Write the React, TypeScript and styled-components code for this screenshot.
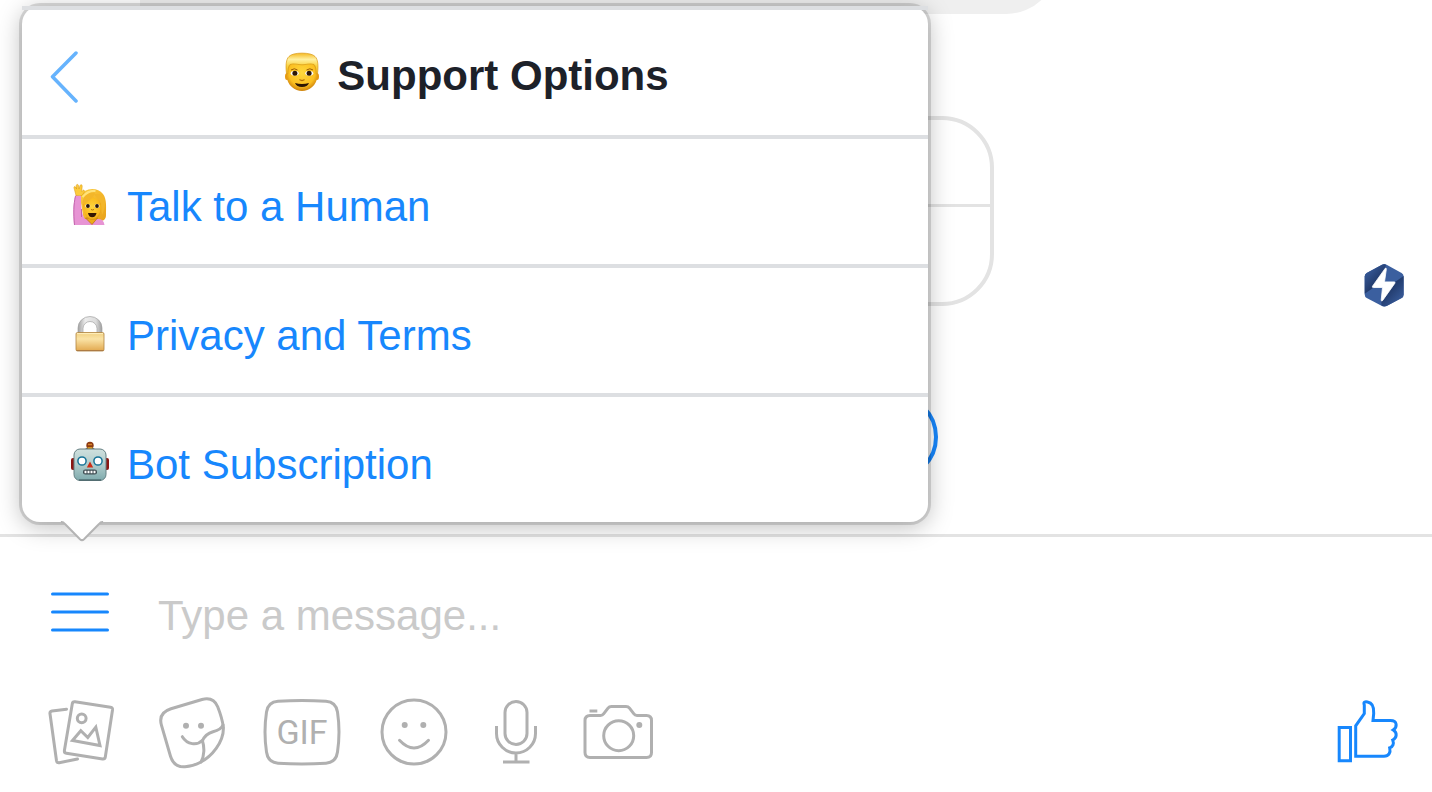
import React from "react";
import styled, { createGlobalStyle } from "styled-components";

const BLUE = "#1787fd";
const GREY = "#b0b0b0";
const LINE = "#e3e3e3";

const GlobalStyle = createGlobalStyle`
  * { box-sizing: border-box; }
  body { margin: 0; background: #fff; font-family: "Liberation Sans", Arial, sans-serif; }
  button { border: 0; padding: 0; background: none; font: inherit; color: inherit; cursor: pointer; }
  svg { display: block; flex: none; }
`;

const Page = styled.div`
  position: relative;
  display: flex;
  flex-direction: column;
  height: 100vh;
  overflow: hidden;
`;

const Conversation = styled.main`
  flex: 1;
  min-height: 0;
  display: flex;
  flex-direction: column;
  justify-content: flex-end;
  overflow: hidden;
  padding: 0 140px 53px;
`;

const Bubble = styled.div`
  flex: none;
  width: 100%;
  max-width: 918px;
  height: 106px;
  margin-bottom: 102px;
  background: #efefef;
  border-radius: 0 52px 52px 0;
`;

const Card = styled.section`
  flex: none;
  display: grid;
  grid-template-rows: 84px 98px;
  width: 100%;
  max-width: 854px;
  margin-bottom: 87px;
  border: 4px solid ${LINE};
  border-radius: 52px;
`;

const CardAction = styled.div`
  &:last-child { border-top: 3px solid ${LINE}; }
`;

const QuickReply = styled.button`
  flex: none;
  align-self: center;
  width: 444px;
  height: 88px;
  && { border: 4px solid ${BLUE}; }
  border-radius: 44px;
`;

const Composer = styled.footer`
  position: relative;
  flex: none;
  border-top: 3px solid ${LINE};
  padding: 48px 32px 23px 48px;
  display: flex;
  flex-direction: column;
  gap: 52px;
`;

const MessageRow = styled.div`
  display: flex;
  align-items: center;
  gap: 46px;
  height: 60px;
`;

const MessageInput = styled.input`
  flex: 1;
  min-width: 0;
  height: 60px;
  padding: 2px 0 0;
  border: 0;
  outline: 0;
  background: none;
  color: #1d2129;
  font: 42px/58px "Liberation Sans", Arial, sans-serif;
  &::placeholder { color: #cacaca; opacity: 1; }
`;

const Toolbar = styled.div`
  display: flex;
  align-items: center;
  gap: 36px;
`;

const ToolButton = styled.button<{ $active?: boolean; $end?: boolean }>`
  margin-left: ${(p) => (p.$end ? "auto" : "0")};
  && { color: ${(p) => (p.$active ? BLUE : GREY)}; }
`;

const Popover = styled.div`
  position: absolute;
  left: 22px;
  bottom: calc(100% + 15px);
  width: 906px;
  max-width: calc(100% - 44px);
  background: #fff;
  border-radius: 18px;
  box-shadow: 0 0 0 3px rgba(0, 0, 0, 0.13), 0 4px 24px 1px rgba(0, 0, 0, 0.26);
`;

const PopoverHeader = styled.header`
  display: grid;
  grid-template-columns: 1fr auto 1fr;
  align-items: center;
  height: 129px;
  padding: 7px 28px 0;
  border-top: 4px solid #dddfe2;
`;

const BackButton = styled.button`
  justify-self: start;
`;

const Title = styled.h1`
  display: flex;
  align-items: center;
  gap: 14px;
  margin: 0;
  color: #1d2129;
  font-size: 42px;
  line-height: 48px;
  font-weight: 700;
  white-space: nowrap;
`;

const MenuItem = styled.button`
  display: flex;
  align-items: center;
  gap: 16px;
  width: 100%;
  height: 129px;
  && {
    padding: 10px 47px 0;
    border-top: 4px solid #dddfe2;
    color: ${BLUE};
  }
  font-size: 42px;
  line-height: 48px;
  text-align: left;
  white-space: nowrap;
`;

const Arrow = styled.svg`
  position: absolute;
  left: 38px;
  top: calc(100% - 2px);
`;

const Badge = styled.button`
  position: absolute;
  top: 264px;
  right: 28px;
`;

const Stroke = styled.svg`
  fill: none;
  stroke: currentColor;
  stroke-width: 3px;
  stroke-linecap: round;
  stroke-linejoin: round;
`;

const ManEmoji = () => (
  <svg width="42" height="48" viewBox="0 0 42 48" aria-hidden="true">
    <defs>
      <radialGradient id="manSkin" cx=".5" cy=".4" r=".62">
        <stop offset="0" stopColor="#ffd83d" />
        <stop offset=".7" stopColor="#fbbf20" />
        <stop offset="1" stopColor="#c87a08" />
      </radialGradient>
      <linearGradient id="manHair" x1="0" y1="0" x2="0" y2="1">
        <stop offset="0" stopColor="#f5b820" />
        <stop offset=".3" stopColor="#fff0a0" />
        <stop offset=".6" stopColor="#fad444" />
        <stop offset="1" stopColor="#f3bd22" />
      </linearGradient>
    </defs>
    <ellipse cx="6" cy="24.500" rx="2" ry="3.500" fill="#e79a12" />
    <ellipse cx="36" cy="24.500" rx="2" ry="3.500" fill="#e79a12" />
    <path d="M6 12C6 7 36 7 36 12v13c0 8-8 14-15 14S6 33 6 25z" fill="url(#manSkin)" />
    <path d="M5.500 21.500C4.500 14 5 7 8 4.500 11.500 0 30.500 0 34 4.500c3 2.500 3.500 9.500 2.500 17l-1.300.5c0-5-.7-8-2.200-9.500-4-1.500-8 .3-12 .3s-8-1.800-12-.3C7.500 14 6.800 17 6.800 22z" fill="url(#manHair)" stroke="#d99812" strokeWidth=".7" />
    <path d="M10 18q3.500-2.500 6.500 0M25.500 18q3.500-2.500 6.500 0" stroke="#9a5b08" strokeWidth="1" fill="none" />
    <ellipse cx="13.700" cy="21.300" rx="4" ry="2.300" fill="#fff" />
    <ellipse cx="28.300" cy="21.300" rx="4" ry="2.300" fill="#fff" />
    <circle cx="13.900" cy="21.300" r="2.500" fill="#2e1705" />
    <circle cx="28.100" cy="21.300" r="2.500" fill="#2e1705" />
    <path d="M18.500 27.500q2.500 2 5 0" stroke="#b66f08" strokeWidth="1.300" fill="none" />
    <path d="M14 31q7 1.800 14 0-1.500 4-7 4t-7-4z" fill="#2c1503" />
  </svg>
);

const WomanEmoji = () => (
  <svg width="42" height="48" viewBox="0 0 42 48" aria-hidden="true">
    <defs>
      <radialGradient id="womanSkin" cx=".5" cy=".45" r=".6">
        <stop offset="0" stopColor="#ffd53c" />
        <stop offset=".75" stopColor="#f9b91d" />
        <stop offset="1" stopColor="#c47708" />
      </radialGradient>
      <linearGradient id="womanHair" x1="0" y1="0" x2="1" y2="1">
        <stop offset="0" stopColor="#f8cf48" />
        <stop offset=".5" stopColor="#f5b72a" />
        <stop offset="1" stopColor="#e7a01a" />
      </linearGradient>
    </defs>
    <path d="M11 14C14 5 28 3 34 11c4 5 3 14 3 21 0 5-3 6-7 6H15z" fill="url(#womanHair)" />
    <path d="M6.500 12 12 13c0 9 0 17 4 23h14c3 0 5 2 5.500 6H5C4 30 4 20 6.500 12z" fill="#e794d4" />
    <path d="M6.500 13C4.500 22 4.500 30 5.500 42M12.500 26v8" stroke="#c468ae" strokeWidth="1" fill="none" />
    <path d="M16.500 35h12l-5.500 6.500z" fill="#edaa18" stroke="#b66d0a" strokeWidth=".7" />
    <path d="M7 12.500C6 8.500 5.500 7 5 5S7 3 7.500 6l-.3-3.500c.3-1.500 2-1.500 2.300 0l.6 3.500.9-3.500c.5-1.300 2.200-1 2.200.5l-.4 5.500 1-1c1-1 2.200-.3 1.200 2L13 12.500z" fill="#fccb3d" stroke="#d7950f" strokeWidth=".5" />
    <path d="M14 20c3-1 8-3 10-6 3 2 6 3 8 7 1 9-3 16-8.500 16S14 29 14 20z" fill="url(#womanSkin)" />
    <path d="M13.500 22C13.500 12 19 8 26 10c-1 5-6 7.500-12.500 12M25 11c2 4 5 5 7 9l1 12c4-8 4-16 0-21z" fill="#f3b62a" />
    <path d="M13.500 14q6-7 13-6" stroke="#ffe27a" strokeWidth="2" fill="none" />
    <ellipse cx="18.800" cy="23" rx="2.500" ry="1.900" fill="#fff" />
    <ellipse cx="28" cy="23" rx="2.500" ry="1.900" fill="#fff" />
    <circle cx="18.900" cy="23" r="1.900" fill="#291405" />
    <circle cx="28" cy="23" r="1.900" fill="#291405" />
    <path d="M22 26.500q1.500 1 3 0" stroke="#b66f08" fill="none" />
    <path d="M19 30h8.500q-.8 4.200-4.300 4.200T19 30z" fill="#341702" />
  </svg>
);

const LockEmoji = () => (
  <svg width="42" height="48" viewBox="0 0 42 48" aria-hidden="true">
    <defs>
      <linearGradient id="brass" x1="0" y1="0" x2="0" y2="1">
        <stop offset="0" stopColor="#f1cf80" />
        <stop offset=".35" stopColor="#fae3a6" />
        <stop offset="1" stopColor="#e2a84e" />
      </linearGradient>
      <linearGradient id="steel" x1="0" y1="0" x2="1" y2="0">
        <stop offset="0" stopColor="#a0a0a0" />
        <stop offset=".3" stopColor="#ececec" />
        <stop offset=".75" stopColor="#dcdcdc" />
        <stop offset="1" stopColor="#9d9d9d" />
      </linearGradient>
    </defs>
    <path d="M9 21V16a12 11.500 0 0 1 24 0v5h-5v-4.500a7 7 0 0 0-14 0V21z" fill="url(#steel)" stroke="#a3a3a3" strokeWidth=".7" />
    <rect x="7" y="20.500" width="28" height="18.500" rx="1.500" fill="url(#brass)" stroke="#b0843f" strokeWidth=".8" />
    <path d="M8 21.600h26" stroke="#fff0bd" strokeWidth="1" />
    <path d="M7.500 38.500h27" stroke="#ad7b43" strokeWidth="1" />
  </svg>
);

const RobotEmoji = () => (
  <svg width="42" height="48" viewBox="0 0 42 48" aria-hidden="true">
    <defs>
      <linearGradient id="robotFace" x1="0" y1="0" x2="0" y2="1">
        <stop offset="0" stopColor="#cfe0de" />
        <stop offset=".5" stopColor="#b0cccb" />
        <stop offset="1" stopColor="#7eaaad" />
      </linearGradient>
    </defs>
    <rect x="2" y="17" width="6" height="12" rx="2" fill="#8b1611" />
    <rect x="34" y="17" width="6" height="12" rx="2" fill="#8b1611" />
    <path d="M16 8.500c0-2.500 10-2.500 10 0z" fill="#3c464c" />
    <circle cx="21" cy="4.500" r="3.700" fill="#8c3a12" />
    <path d="M19 3.500h4" stroke="#d8832a" strokeWidth="1.500" />
    <path d="M18.500 7h5" stroke="#e9b228" strokeWidth="1.500" />
    <rect x="5" y="8" width="32" height="31.500" rx="6" fill="url(#robotFace)" stroke="#647f82" strokeWidth="1" />
    <path d="M10 39h22" stroke="#496468" strokeWidth="1.300" />
    <circle cx="13" cy="20" r="4.100" fill="#fff" stroke="#177397" strokeWidth="1.500" />
    <circle cx="29" cy="20" r="4.100" fill="#fff" stroke="#177397" strokeWidth="1.500" />
    <path d="m21 20.500 3.200 6h-6.400z" fill="#cd2e16" />
    <rect x="14" y="28.500" width="14" height="5" rx="2.300" fill="#3c4b50" />
    <path d="M15.500 31h11" stroke="#fff" strokeWidth="2.500" strokeDasharray="2 1" />
  </svg>
);

const PhotoIcon = () => (
  <Stroke width="74" height="72" viewBox="48 697 74 72" aria-hidden="true">
    <path d="M66.500 709.200 52 711q-2.300.4-2 2.700l6.500 47q.4 2.300 2.700 2L77.500 759" />
    <path d="m75 701.800 35.500 5.400q2.300.4 2 2.700l-7.200 47q-.4 2.300-2.700 2l-36.200-5.600q-2.300-.4-2-2.700l7.900-46.800q.4-2.300 2.700-2z" />
    <circle cx="81.700" cy="718.300" r="4.400" />
    <path strokeLinejoin="miter" d="m72.500 740.500 8.300-9.800 7 6.800 8-10.300 4.200 18.300z" />
  </Stroke>
);

const StickerIcon = () => (
  <Stroke width="68" height="72" viewBox="158 697 68 72" aria-hidden="true">
    <path d="m171 708.800 31-9.300q11.500-3 15.700 7.300 4.500 11.500 5.700 20.500c.5 15-11.900 29.500-23.400 35.200-4.500 2.500-10 4-15 4.300-8 .5-12.500-4-14.500-10.500l-9-31c-2.500-8.500 1.500-14 9.500-16.500z" />
    <path d="M223 725c-1.500 4-5 5.500-10 6.700-5.500 1.500-8.500 4.300-10.500 9M202.500 741c2 6 2 15-1.500 21" />
    <path d="M182.300 736.700c5 8 14.500 9.300 20.200 3.600" />
    <circle cx="186" cy="725.700" r="3" fill="currentColor" stroke="none" />
    <circle cx="201" cy="725.700" r="3" fill="currentColor" stroke="none" />
  </Stroke>
);

const GifText = styled.text`
  fill: currentColor;
  stroke: none;
  font: 400 34px Roboto, sans-serif;
  text-anchor: middle;
`;

const GifIcon = () => (
  <Stroke width="80" height="72" viewBox="262 697 80 72" aria-hidden="true">
    <path d="M278 701.300q24-1.800 48 0 10 .7 11.500 10.700 3 20 0 40-1.500 10.500-11.500 11.200-24 1.600-48 0-10-.7-11.500-11.200-3-20 0-40 1.500-10 11.500-10.700z" />
    <GifText x="302" y="744">GIF</GifText>
  </Stroke>
);

const SmileIcon = () => (
  <Stroke width="72" height="72" viewBox="378 697 72 72" aria-hidden="true">
    <circle cx="414" cy="732" r="32" />
    <path d="M399.500 740.300q14.500 15.500 29 0" />
    <circle cx="404.700" cy="725" r="3" fill="currentColor" stroke="none" />
    <circle cx="423.300" cy="725" r="3" fill="currentColor" stroke="none" />
  </Stroke>
);

const MicIcon = () => (
  <Stroke width="60" height="72" viewBox="486 697 60 72" aria-hidden="true">
    <rect x="505" y="701.500" width="22" height="43" rx="11" />
    <path strokeLinecap="butt" d="M496.500 726v7.500a19.500 19.500 0 0 0 39 0V726M516 753v9M503 762h26.500" />
  </Stroke>
);

const CameraIcon = () => (
  <Stroke width="72" height="72" viewBox="582 697 72 72" aria-hidden="true">
    <path d="M590 715.500h10.500q2 0 3.300-1.800l4.200-5.500q1.300-1.700 3.500-1.700H626q2.200 0 3.500 1.700l4.200 5.500q1.300 1.800 3.300 1.800h9.500q5 0 5 5v32q0 5-5 5H590q-5 0-5-5v-32q0-5 5-5z" />
    <circle cx="618.700" cy="735.700" r="15" />
    <path strokeLinecap="butt" d="M589.500 711h7.800" />
    <circle cx="639.300" cy="725" r="3" fill="currentColor" stroke="none" />
  </Stroke>
);

const LikeIcon = () => (
  <Stroke width="64" height="72" viewBox="1336 697 64 72" aria-hidden="true">
    <path strokeLinejoin="miter" d="M1339.200 727.500h11.300v33.300h-11.300zM1355.700 756.300v-30.500l8.600-12.300v-8.500c-1.300-3.500 1.200-3.300 3.200-3 5.200.7 6.500 6 6.200 11.500l-.7 7h17.500c7 0 7 6.500 2.700 9.500 4.300 2.500 3.800 8-.5 10 1.500 3.800.3 6.700-3 7.800 1.200 5-1 8.500-5.700 8.500z" />
  </Stroke>
);

const BoltBadge = () => (
  <svg width="40" height="43" viewBox="1364 264 40 43" aria-hidden="true">
    <defs>
      <linearGradient id="hexLeft" x1="0" y1="0" x2=".8" y2="1">
        <stop offset=".1" stopColor="#3b5f9f" />
        <stop offset=".7" stopColor="#1f3767" />
      </linearGradient>
      <linearGradient id="hexRight" x1="1" y1="1" x2=".2" y2="0">
        <stop offset=".1" stopColor="#3b5f9f" />
        <stop offset=".7" stopColor="#1f3767" />
      </linearGradient>
    </defs>
    <path d="M1382 264.700q2.300-1.200 4.600 0l15 8.200q2 1.200 2 3.500v18q0 2.300-2 3.500l-15 8.200q-2.300 1.200-4.600 0l-15.300-8.200q-2-1.200-2-3.500v-18q0-2.300 2-3.500z" fill="#3b5f9f" />
    <path d="M1382 264.700q2-1 4 0l-1 5-10.300 17-10 7v-17.300q0-2.300 2-3.500z" fill="url(#hexLeft)" />
    <path d="M1382 306q-1-1-.5-5l13.500-19 8.600-6v18.400q0 2.300-2 3.500l-15 8.200z" fill="url(#hexRight)" />
    <path d="M1385.300 268.200 1372.500 286.200q-.7 1.300.8 1.300h9.200l-1.300 12.500c0 1.100.8 1.300 1.500.4l12.200-17.200q.7-1.300-.8-1.300h-9.600l1.800-12.400c0-1.300-.4-1.800-1-1.300z" fill="#fff" stroke="#fff" strokeWidth=".8" strokeLinejoin="round" />
  </svg>
);

const MenuIcon = () => (
  <Stroke width="64" height="60" viewBox="48 585 64 60" aria-hidden="true">
    <path d="M52.500 594h55M52.500 612h55M52.500 630h55" />
  </Stroke>
);

const BackIcon = () => (
  <Stroke width="30" height="54" viewBox="50 50 30 54" color="#66b3fd" aria-hidden="true">
    <path strokeWidth="3.500" d="M76 54 52.500 77.700 76 102" />
  </Stroke>
);

const menuItems = [
  { label: "Talk to a Human", Icon: WomanEmoji },
  { label: "Privacy and Terms", Icon: LockEmoji },
  { label: "Bot Subscription", Icon: RobotEmoji },
];

const tools = [
  { label: "Photos", Icon: PhotoIcon },
  { label: "Stickers", Icon: StickerIcon },
  { label: "GIF", Icon: GifIcon },
  { label: "Emoji", Icon: SmileIcon },
  { label: "Voice message", Icon: MicIcon },
  { label: "Camera", Icon: CameraIcon },
];

export default function App() {
  return (
    <Page>
      <GlobalStyle />
      <Conversation>
        <Bubble />
        <Card>
          <CardAction />
          <CardAction />
        </Card>
        <QuickReply type="button" aria-label="Quick reply" />
      </Conversation>

      <Composer>
        <MessageRow>
          <ToolButton type="button" $active aria-label="Menu">
            <MenuIcon />
          </ToolButton>
          <MessageInput type="text" aria-label="Message" placeholder="Type a message..." />
        </MessageRow>
        <Toolbar>
          {tools.map(({ label, Icon }) => (
            <ToolButton key={label} type="button" aria-label={label}>
              <Icon />
            </ToolButton>
          ))}
          <ToolButton type="button" $active $end aria-label="Like">
            <LikeIcon />
          </ToolButton>
        </Toolbar>

        <Popover role="menu">
          <PopoverHeader>
            <BackButton type="button" aria-label="Back">
              <BackIcon />
            </BackButton>
            <Title>
              <ManEmoji />
              Support Options
            </Title>
          </PopoverHeader>
          {menuItems.map(({ label, Icon }) => (
            <MenuItem key={label} type="button" role="menuitem">
              <Icon />
              {label}
            </MenuItem>
          ))}
          <Arrow width="44" height="24" viewBox="60 520 44 24" aria-hidden="true">
            <path d="M61 519h42l-1.500 3L82 541l-19.500-19z" fill="#fff" />
            <path d="M61 522q2-.5 4 2l15 15.200q2 1.800 4 0L99 524q2-2.500 4-2" fill="none" stroke="#b4b4b4" strokeWidth="2" />
          </Arrow>
        </Popover>
      </Composer>

      <Badge type="button" aria-label="Shortcuts">
        <BoltBadge />
      </Badge>
    </Page>
  );
}
